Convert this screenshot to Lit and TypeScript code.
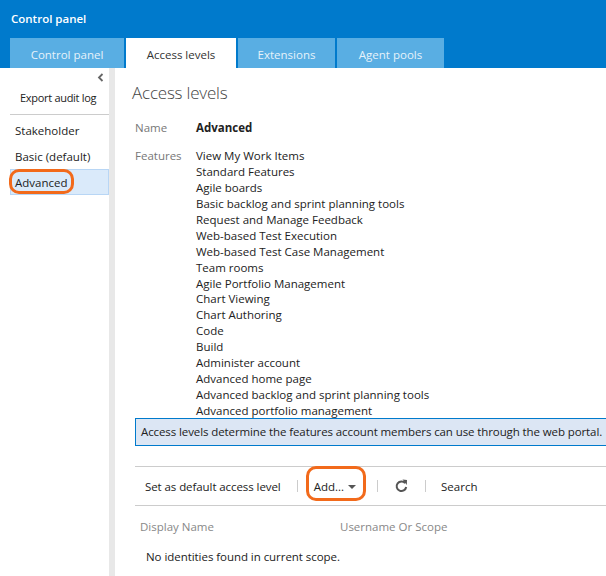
import { LitElement, html, css } from "lit";
import { customElement } from "lit/decorators.js";

const TABS = [
    { label: "Control panel", width: 114 },
    { label: "Access levels", width: 110 },
    { label: "Extensions", width: 97 },
    { label: "Agent pools", width: 107 },
];
const LEVELS = ["Stakeholder", "Basic (default)", "Advanced"];
const FEATURES = [
    "View My Work Items",
    "Standard Features",
    "Agile boards",
    "Basic backlog and sprint planning tools",
    "Request and Manage Feedback",
    "Web-based Test Execution",
    "Web-based Test Case Management",
    "Team rooms",
    "Agile Portfolio Management",
    "Chart Viewing",
    "Chart Authoring",
    "Code",
    "Build",
    "Administer account",
    "Advanced home page",
    "Advanced backlog and sprint planning tools",
    "Advanced portfolio management",
];

@customElement("app-root")
export class AppRoot extends LitElement {
    static styles = css`
    :host {
      display: block;
      width: 606px;
      height: 576px;
      overflow: hidden;
      background: #fff;
      color: #222;
      font: 11.5px/16px "Open Sans", "Noto Sans", sans-serif;
    }

    .header {
      height: 68px;
      background: #007acc;
      box-sizing: border-box;
      padding-top: 11px;
      display: flex;
      flex-direction: column;
      justify-content: space-between;
    }

    .title {
      color: #fff;
      font-weight: 600;
      padding-left: 11px;
    }

    .tabs {
      display: flex;
      gap: 2px;
      padding-left: 10px;
    }

    .tab {
      height: 30px;
      box-sizing: border-box;
      padding-top: 9px;
      text-align: center;
      background: #59aee3;
      color: #e6f2fa;
    }

    .tab.active {
      background: #fff;
      color: #333;
    }

    .body {
      display: flex;
      height: 508px;
    }

    .side {
      width: 109px;
      flex: none;
      box-sizing: border-box;
      padding-left: 10px;
    }

    .collapse {
      height: 19px;
      display: flex;
      justify-content: flex-end;
      align-items: center;
      padding-right: 5px;
    }

    .export {
      height: 28px;
      box-sizing: border-box;
      border-bottom: 1px solid #ccc;
      padding: 3px 0 0 10px;
      font-size: 11px;
      letter-spacing: -0.3px;
    }

    .levels {
      padding-top: 2px;
    }

    .level {
      height: 26px;
      box-sizing: border-box;
      padding: 6px 0 0 5px;
      position: relative;
    }

    .level.selected {
      background: #daeafa;
      border: 1px solid #b8d6f5;
      padding: 5px 0 0 4px;
    }

    .ring {
      position: absolute;
      border: 3px solid #f26a1b;
      box-sizing: border-box;
    }

    .level .ring {
      left: -2px;
      top: -1px;
      width: 65px;
      height: 25px;
      border-radius: 10px;
    }

    .splitter {
      width: 6px;
      flex: none;
      background: #e8e8e8;
    }

    .main {
      flex: 1;
      min-width: 0;
      padding-left: 16px;
    }

    h1 {
      margin: 0;
      padding: 13px 0 0 1px;
      height: 39px;
      font-size: 17px;
      line-height: 23px;
      font-weight: 300;
      letter-spacing: -0.2px;
      color: #444;
    }

    .field {
      display: grid;
      grid-template-columns: 61px 1fr;
      padding-left: 4px;
    }

    .label {
      color: #777;
    }

    .name {
      font-weight: 700;
      margin-bottom: 12px;
    }

    .feature {
      height: 15.94px;
    }

    .note {
      height: 28px;
      box-sizing: border-box;
      margin: -1px 0 20px 4px;
      background: #dce6f4;
      border: 1px solid #007acc;
      border-right: none;
      padding: 5px 0 0 5px;
      white-space: nowrap;
      letter-spacing: -0.1px;
    }

    .bar {
      height: 40px;
      box-sizing: border-box;
      margin-left: 4px;
      border-top: 1px solid #ccc;
      border-bottom: 1px solid #ccc;
      display: flex;
      align-items: center;
    }

    .bar .sep {
      width: 1px;
      height: 12px;
      background: #ccc;
      flex: none;
    }

    .default {
      margin-left: 10px;
      margin-right: 16px;
      padding-top: 3px;
      letter-spacing: -0.08px;
    }

    .add {
      position: relative;
      margin: 0 21px 0 16px;
      padding-top: 3px;
      display: flex;
      align-items: center;
      gap: 4px;
    }

    .add .ring {
      left: -8px;
      top: -10px;
      width: 60px;
      height: 35px;
      border-radius: 10px;
    }

    .caret {
      width: 0;
      height: 0;
      border: 4px solid transparent;
      border-top: 4px solid #555;
      border-bottom: none;
    }

    .refresh {
      display: block;
      margin: 0 17px 0 17px;
    }

    .search {
      margin-left: 15px;
      padding-top: 3px;
    }

    .cols {
      display: flex;
      color: #888;
      padding: 13px 0 0 9px;
    }

    .cols span:first-child {
      width: 200px;
    }

    .empty {
      padding: 14px 0 0 15px;
      letter-spacing: -0.05px;
    }
  `;

    render() {
        return html`
      <div class="header">
        <div class="title">Control panel</div>
        <div class="tabs">
          ${TABS.map((t, i) => html`
            <div class="tab ${i === 1 ? "active" : ""}" style="width:${t.width}px">${t.label}</div>
          `)}
        </div>
      </div>
      <div class="body">
        <div class="side">
          <div class="collapse">
            <svg width="7" height="9" viewBox="0 0 7 9"><path d="M5.5 1 L2 4.5 L5.5 8" fill="none" stroke="#666" stroke-width="1.8"/></svg>
          </div>
          <div class="export">Export audit log</div>
          <div class="levels">
            ${LEVELS.map((l, i) => html`
              <div class="level ${i === 2 ? "selected" : ""}">
                ${l}${i === 2 ? html`<div class="ring"></div>` : ""}
              </div>
            `)}
          </div>
        </div>
        <div class="splitter"></div>
        <div class="main">
          <h1>Access levels</h1>
          <div class="field">
            <div class="label">Name</div>
            <div class="name">Advanced</div>
            <div class="label">Features</div>
            <div>${FEATURES.map((f) => html`<div class="feature">${f}</div>`)}</div>
          </div>
          <div class="note">Access levels determine the features account members can use through the web portal.</div>
          <div class="bar">
            <span class="default">Set as default access level</span>
            <span class="sep"></span>
            <span class="add">Add...<span class="caret"></span><div class="ring"></div></span>
            <span class="sep"></span>
            <svg class="refresh" width="13" height="14" viewBox="0 0 13 14">
              <path d="M10.2 4.2 A4.8 4.8 0 1 0 11.2 8" fill="none" stroke="#555" stroke-width="2"/>
              <path d="M7.5 0.5 L12 1 L11.8 6 Z" fill="#555"/>
            </svg>
            <span class="sep"></span>
            <span class="search">Search</span>
          </div>
          <div class="cols"><span>Display Name</span><span>Username Or Scope</span></div>
          <div class="empty">No identities found in current scope.</div>
        </div>
      </div>
    `;
    }
}
